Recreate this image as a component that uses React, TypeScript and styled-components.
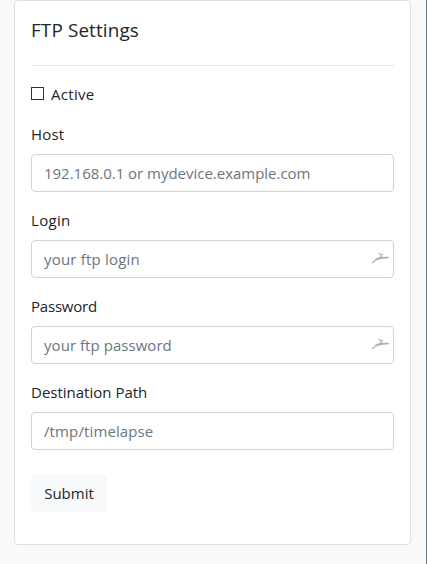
import React from "react";
import styled, { createGlobalStyle } from "styled-components";

const GlobalStyle = createGlobalStyle`
  * { box-sizing: border-box; }
  body {
    margin: 0;
    background: #f8f9fa;
    color: #212529;
    font-family: "Open Sans", "Noto Sans", sans-serif;
    font-size: 15px;
    line-height: 24px;
  }
`;

const Page = styled.main`
  height: 564px;
  padding: 0 15px 0 14px;
  border-right: 1px solid #6c757d;
  overflow: hidden;
`;

const Card = styled.form`
  height: 545px;
  padding: 17px 16px 0;
  background: #fff;
  border: 1px solid #dfdfdf;
  border-radius: 4px;
`;

const Title = styled.h5`
  margin: 0;
  height: 24px;
  font-size: 18.9px;
  font-weight: 400;
  letter-spacing: 0.12px;
`;

const Text = styled.span<{ $spacing?: number }>`
  letter-spacing: ${(p) => p.$spacing ?? 0}px;
`;

const Divider = styled.hr`
  margin: 23px 0 16px;
  border: 0;
  border-top: 1px solid #e5e5e5;
`;

const CheckRow = styled.label`
  display: flex;
  align-items: center;
  gap: 7px;
  height: 24px;
  margin-bottom: 16px;
`;

const Checkbox = styled.input`
  appearance: none;
  width: 13px;
  height: 13px;
  margin: 0 0 2px;
  border: 1px solid #333;
  background: #fff;
`;

const Field = styled.div`
  margin-bottom: 16px;
`;

const Label = styled.label`
  display: block;
  height: 24px;
  margin-bottom: 8px;
`;

const Control = styled.div`
  display: flex;
  align-items: center;
  height: 38px;
  padding: 0 4px 0 12px;
  border: 1px solid #ced4da;
  border-radius: 4px;
  background: #fff;
`;

const Input = styled.input<{ $spacing: number }>`
  flex: 1;
  min-width: 0;
  height: 24px;
  padding: 0;
  border: 0;
  outline: 0;
  background: transparent;
  color: #495057;
  font: inherit;
  letter-spacing: ${(p) => p.$spacing}px;

  &::placeholder {
    color: #6c757d;
    opacity: 1;
  }
`;

const Submit = styled.button`
  display: block;
  width: 76px;
  height: 38px;
  margin-top: 24px;
  padding: 0;
  border: 0;
  border-radius: 4px;
  background: #f8f9fa;
  color: #212529;
  font: inherit;
`;

const Gazelle = () => (
  <svg width="18" height="14" viewBox="0 0 18 14" fill="none" aria-hidden="true">
    <path d="M1 11 5.2 7.8" stroke="#b0b0b0" strokeWidth="1.3" />
    <path d="M4.4 6.8 8.2 5.5 10.6 4.2 11.4 4.8 10 5.2 17.6 5.1V5.9L10.2 6.7 5.3 8.1Z" fill="#a8a8a8" stroke="#b0b0b0" strokeWidth=".5" />
    <path d="M10.4 4.6 9.7 2.4 7.4 .9M9.6 2.2 12.2 2.8" stroke="#b0b0b0" strokeWidth="1.1" />
  </svg>
);

const fields = [
  { id: "host", label: "Host", hint: "192.168.0.1 or mydevice.example.com", labelSpacing: 0.15, spacing: -0.02 },
  { id: "login", label: "Login", hint: "your ftp login", labelSpacing: 0.3, spacing: 0.2, mark: true },
  { id: "password", label: "Password", hint: "your ftp password", labelSpacing: -0.2, spacing: 0.05, mark: true },
  { id: "path", label: "Destination Path", hint: "/tmp/timelapse", labelSpacing: 0, spacing: 0.12 },
];

export default function App() {
  return (
    <>
      <GlobalStyle />
      <Page>
        <Card>
          <Title>FTP Settings</Title>
          <Divider />
          <CheckRow>
            <Checkbox type="checkbox" />
            <Text $spacing={0.3}>Active</Text>
          </CheckRow>
          {fields.map((f) => (
            <Field key={f.id}>
              <Label htmlFor={f.id}>
                <Text $spacing={f.labelSpacing}>{f.label}</Text>
              </Label>
              <Control>
                <Input id={f.id} placeholder={f.hint} $spacing={f.spacing} />
                {f.mark && <Gazelle />}
              </Control>
            </Field>
          ))}
          <Submit type="button">
            <Text>Submit</Text>
          </Submit>
        </Card>
      </Page>
    </>
  );
}
